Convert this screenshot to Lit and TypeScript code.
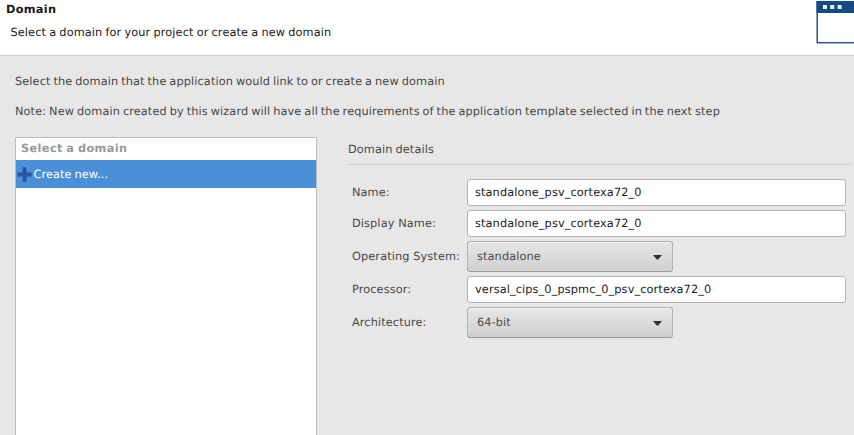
import { LitElement, html, css, svg } from "lit";
import { customElement, property } from "lit/decorators.js";

@customElement("wizard-header")
class WizardHeader extends LitElement {
  static styles = css`
    :host { display: flex; justify-content: space-between; box-sizing: border-box; height: 56px; background: #fff; border-bottom: 1px solid #cfcfcf; color: #1a1a1a; overflow: hidden; }
    .title { font-weight: bold; line-height: 14px; padding: 3px 0 0 6px; letter-spacing: 0.3px; }
    .sub { line-height: 14px; padding: 9px 0 0 10.5px; word-spacing: -0.6px; }
    svg { display: block; flex: none; }
  `;
  render() {
    return html`
      <div>
        <div class="title">Domain</div>
        <div class="sub">Select a domain for your project or create a new domain</div>
      </div>
      <svg width="38" height="55" viewBox="0 0 38 55">
        <rect x="1.2" y="1.7" width="50" height="41" fill="#fff" stroke="#2b588d" stroke-width="1.5" />
        <rect x="0.5" y="1" width="50" height="12" fill="#164a82" />
        ${[7, 14.2, 21.6].map((x) => svg`<rect x=${x} y="5" width="4" height="4" fill="#e9f1f8" />`)}
      </svg>
    `;
  }
}

@customElement("domain-list")
class DomainList extends LitElement {
  static styles = css`
    :host { display: block; box-sizing: border-box; width: 302px; border: 1px solid #bcbcbc; border-bottom: none; background: #fff; }
    .head { height: 22px; line-height: 21px; padding-left: 5px; font-weight: bold; color: #999; letter-spacing: 0.4px; }
    .row { height: 28px; display: flex; align-items: center; background: #4a90d9; color: #fff; padding-left: 1px; gap: 1.5px; letter-spacing: 0.1px; }
    svg { display: block; }
  `;
  render() {
    return html`
      <div class="head">Select a domain</div>
      <div class="row">
        <svg width="15" height="15" viewBox="0 0 15 15"><path d="M5.7 0.3h3.8v5.3h5.3v3.8h-5.3v5.3h-3.8v-5.3h-5.3v-3.8h5.3z" fill="#2b5596" /></svg>
        <span>Create new...</span>
      </div>
    `;
  }
}

@customElement("form-field")
class FormField extends LitElement {
  @property() label = "";
  @property() value = "";
  @property() kind = "text";
  static styles = css`
    :host { display: flex; align-items: center; }
    .label { width: 115px; flex: none; white-space: nowrap; padding-bottom: 1px; word-spacing: 0; }
    .box { box-sizing: border-box; display: flex; align-items: center; justify-content: space-between; white-space: nowrap; border-radius: 3px; }
    .text { flex: 1; height: 27px; padding: 0 7px 1px; background: #fff; border: 1px solid #b5b5b5; color: #1c1c1c; }
    .select { width: 206px; height: 31px; padding: 0 10px 1px 9px; border: 1px solid #b1b1b1; border-bottom-color: #999; background: linear-gradient(#e6e6e6, #d0d0d0); color: #4c4c4c; box-shadow: inset 0 1px #f0f0f0; }
    svg { display: block; margin-top: 2px; }
  `;
  render() {
    return html`
      <div class="label">${this.label}</div>
      <div class="box ${this.kind}">
        <span>${this.value}</span>
        ${this.kind === "select"
          ? html`<svg width="9" height="5" viewBox="0 0 9 5"><path d="M0 0h9L5.2 4.6h-1.4z" fill="#2e3436" /></svg>`
          : null}
      </div>
    `;
  }
}

@customElement("app-root")
class AppRoot extends LitElement {
  static styles = css`
    :host { display: flex; flex-direction: column; height: 435px; overflow: hidden; background: #e7e7e7; color: #484848; font: 11.3px "DejaVu Sans", sans-serif; text-rendering: geometricPrecision; letter-spacing: 0.12px; word-spacing: -0.8px; }
    .intro { padding: 18px 0 0 15px; line-height: 15px; white-space: nowrap; }
    .intro p { margin: 0 0 15px; }
    .intro p + p { margin-bottom: 16px; }
    .cols { flex: 1; display: flex; gap: 31px; padding: 2px 3px 0 15px; }
    .details { flex: 1; }
    .heading { line-height: 15px; padding: 5px 0 7px; border-bottom: 1px solid #cdcdcd; }
    .fields { display: flex; flex-direction: column; gap: 4px; padding: 14px 5px 0 4px; }
  `;
  render() {
    const fields = [
      ["Name:", "standalone_psv_cortexa72_0", "text"],
      ["Display Name:", "standalone_psv_cortexa72_0", "text"],
      ["Operating System:", "standalone", "select"],
      ["Processor:", "versal_cips_0_pspmc_0_psv_cortexa72_0", "text"],
      ["Architecture:", "64-bit", "select"],
    ];
    return html`
      <wizard-header></wizard-header>
      <div class="intro">
        <p>Select the domain that the application would link to or create a new domain</p>
        <p>Note: New domain created by this wizard will have all the requirements of the application template selected in the next step</p>
      </div>
      <div class="cols">
        <domain-list></domain-list>
        <div class="details">
          <div class="heading">Domain details</div>
          <div class="fields">
            ${fields.map(([l, v, k]) => html`<form-field .label=${l} .value=${v} .kind=${k}></form-field>`)}
          </div>
        </div>
      </div>
    `;
  }
}
